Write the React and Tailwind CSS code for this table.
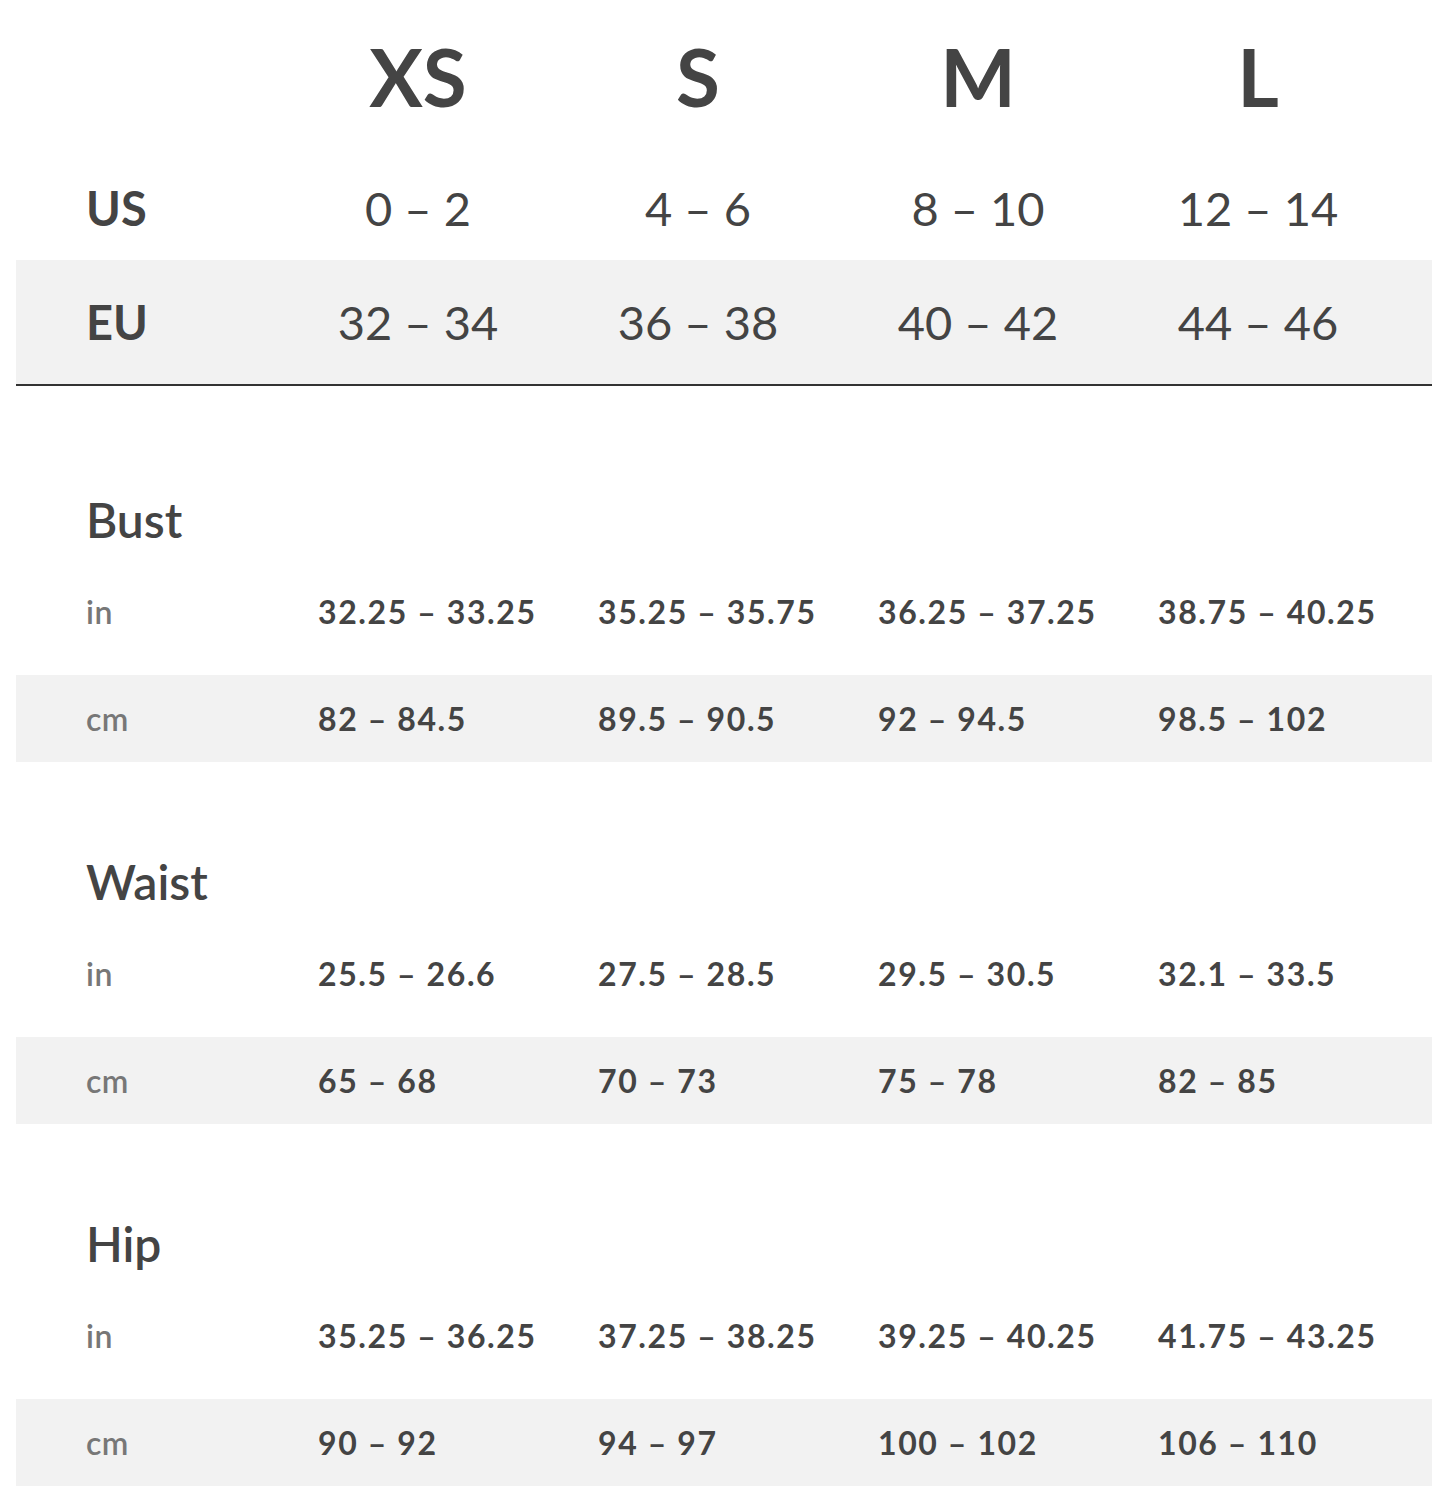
import React from 'react';

const sizes = ['XS', 'S', 'M', 'L'];

const conversions = [
  { label: 'US', values: ['0 – 2', '4 – 6', '8 – 10', '12 – 14'], shaded: false },
  { label: 'EU', values: ['32 – 34', '36 – 38', '40 – 42', '44 – 46'], shaded: true },
];

const measurements = [
  {
    name: 'Bust',
    inches: ['32.25 – 33.25', '35.25 – 35.75', '36.25 – 37.25', '38.75 – 40.25'],
    cm: ['82 – 84.5', '89.5 – 90.5', '92 – 94.5', '98.5 – 102'],
  },
  {
    name: 'Waist',
    inches: ['25.5 – 26.6', '27.5 – 28.5', '29.5 – 30.5', '32.1 – 33.5'],
    cm: ['65 – 68', '70 – 73', '75 – 78', '82 – 85'],
  },
  {
    name: 'Hip',
    inches: ['35.25 – 36.25', '37.25 – 38.25', '39.25 – 40.25', '41.75 – 43.25'],
    cm: ['90 – 92', '94 – 97', '100 – 102', '106 – 110'],
  },
];

const MeasureRow = ({ unit, values, shaded }) => (
  <div className={`flex items-center ${shaded ? 'h-[87px] bg-[#f2f2f2]' : 'h-[40px]'}`}>
    <div className="w-[262px] pl-[70px] text-[32px] font-semibold tracking-[0.5px] text-[#777]">{unit}</div>
    {values.map((v, i) => (
      <div key={i} className="w-[280px] whitespace-nowrap pl-[40px] text-[32px] font-bold tracking-[1.6px] text-[#444]">
        {v}
      </div>
    ))}
  </div>
);

export default function App() {
  return (
    <div
      className="w-[1432px] bg-white pl-[16px] text-[#444]"
      style={{ fontFamily: 'Lato, "Open Sans", sans-serif' }}
    >
      {/* Size header */}
      <div className="flex h-[152px] items-center">
        <div className="w-[262px]" />
        {sizes.map((s) => (
          <div key={s} className="w-[280px] text-center text-[80px] font-bold leading-none">
            {s}
          </div>
        ))}
      </div>

      {/* US / EU conversion */}
      {conversions.map((row) => (
        <div
          key={row.label}
          className={`flex items-center ${row.shaded ? 'h-[124px] bg-[#f2f2f2]' : 'h-[108px] pt-[4px]'}`}
        >
          <div className="w-[262px] pl-[70px] text-[47px] font-bold">{row.label}</div>
          {row.values.map((v, i) => (
            <div key={i} className="w-[280px] text-center text-[47px] font-normal">
              {v}
            </div>
          ))}
        </div>
      ))}
      <div className="h-[2px] bg-[#333]" />

      {/* Measurements */}
      <div className="mt-[110px] flex flex-col gap-[96px]">
        {measurements.map((m) => (
          <div key={m.name} className="flex flex-col">
            <div className="flex h-[48px] items-center pl-[70px] text-[48px] font-semibold">{m.name}</div>
            <div className="mt-[48px]">
              <MeasureRow unit="in" values={m.inches} />
            </div>
            <div className="mt-[43px]">
              <MeasureRow unit="cm" values={m.cm} shaded />
            </div>
          </div>
        ))}
      </div>
    </div>
  );
}
